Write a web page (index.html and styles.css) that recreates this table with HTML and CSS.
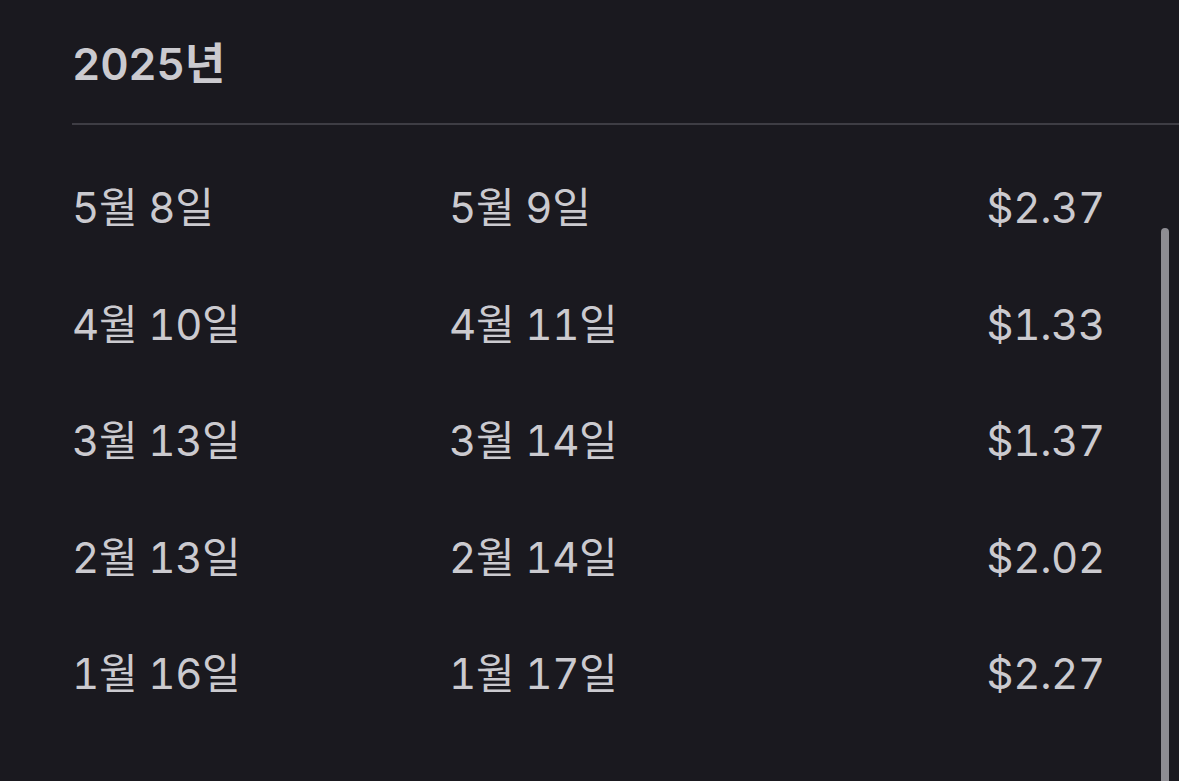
FILE: index.html
```html
<!DOCTYPE html>
<html lang="ko">
<head>
<meta charset="utf-8">
<link rel="stylesheet" href="styles.css">
</head>
<body>
<div class="page">
  <div class="section">
    <h2 class="year">2025년</h2>
    <div class="rows">
      <div class="row"><span class="c1">5월 8일</span><span class="c2">5월 9일</span><span class="c3">$2.37</span></div>
      <div class="row"><span class="c1">4월 10일</span><span class="c2">4월 11일</span><span class="c3">$1.33</span></div>
      <div class="row"><span class="c1">3월 13일</span><span class="c2">3월 14일</span><span class="c3">$1.37</span></div>
      <div class="row"><span class="c1">2월 13일</span><span class="c2">2월 14일</span><span class="c3">$2.02</span></div>
      <div class="row"><span class="c1">1월 16일</span><span class="c2">1월 17일</span><span class="c3">$2.27</span></div>
    </div>
  </div>
  <div class="scrollbar"></div>
</div>
</body>
</html>
```
FILE: styles.css
```css
* { box-sizing: border-box; }
html, body {
  margin: 0;
  padding: 0;
  background: #1a191f;
  height: 100%;
  overflow: hidden;
}
body {
  font-family: "Inter", "Noto Sans CJK KR", sans-serif;
  color: #cbcacf;
  font-variant-numeric: tabular-nums;
}
.page {
  position: relative;
  height: 781px;
  padding-left: 72px;
  overflow: hidden;
}
.section {
  display: flex;
  flex-direction: column;
}
.year {
  margin: 0;
  height: 125px;
  padding-top: 37px;
  font-size: 44px;
  font-weight: 600;
  line-height: 54px;
  border-bottom: 2px solid #3e3d44;
  letter-spacing: -0.3px;
}
.rows {
  display: flex;
  flex-direction: column;
  padding-top: 25px;
}
.row {
  display: flex;
  align-items: center;
  height: 116.5px;
  font-size: 42px;
  line-height: 1;
  padding-right: 74px;
  letter-spacing: -0.3px;
}
.c1 { width: 377px; }
.c2 { flex: 1; }
.c3 { text-align: right; }
.scrollbar {
  position: absolute;
  left: 1161px;
  top: 228px;
  width: 8px;
  height: 553px;
  border-radius: 4px 4px 0 0;
  background: #8e8d93;
}
```
